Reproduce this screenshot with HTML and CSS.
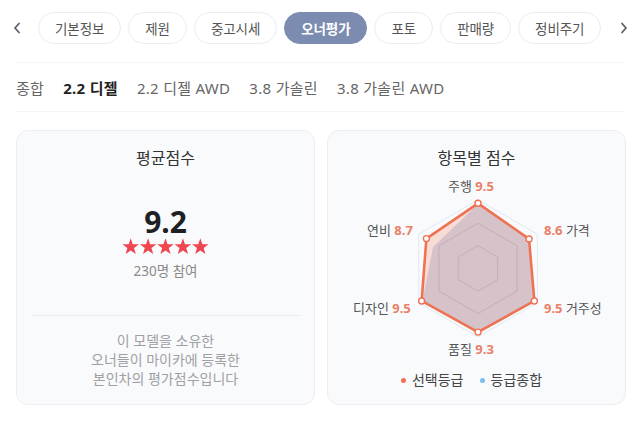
FILE: index.html
```html
<!DOCTYPE html>
<html lang="ko">
<head>
<meta charset="utf-8">
<link rel="stylesheet" href="styles.css">
</head>
<body>
<nav class="tabs">
  <span class="arrow"><svg width="8" height="12" viewBox="0 0 8 12"><path d="M6 1.5L2 6l4 4.5" fill="none" stroke="#5a5f6a" stroke-width="1.8" stroke-linecap="round" stroke-linejoin="round"/></svg></span>
  <span class="pill">기본정보</span>
  <span class="pill">제원</span>
  <span class="pill">중고시세</span>
  <span class="pill active">오너평가</span>
  <span class="pill">포토</span>
  <span class="pill">판매량</span>
  <span class="pill">정비주기</span>
  <span class="arrow right"><svg width="8" height="12" viewBox="0 0 8 12"><path d="M2 1.5L6 6l-4 4.5" fill="none" stroke="#5a5f6a" stroke-width="1.8" stroke-linecap="round" stroke-linejoin="round"/></svg></span>
</nav>

<div class="filters">
  <span class="filter">종합</span>
  <span class="filter on">2.2 디젤</span>
  <span class="filter">2.2 디젤 AWD</span>
  <span class="filter">3.8 가솔린</span>
  <span class="filter">3.8 가솔린 AWD</span>
</div>

<main class="cards">
  <section class="card avg">
    <h2 class="card-title">평균점수</h2>
    <div class="score">9.2</div>
    <svg class="stars" width="88" height="18" viewBox="0 0 88 18">
      <defs><polygon id="st" points="8.7,0.3 10.76,6.17 16.97,6.31 12.03,10.08 13.81,16.04 8.7,12.5 3.59,16.04 5.37,10.08 0.43,6.31 6.64,6.17" fill="#f0464f"/></defs>
      <use href="#st" x="0"/><use href="#st" x="17.4"/><use href="#st" x="34.8"/><use href="#st" x="52.2"/><use href="#st" x="69.6"/>
    </svg>
    <div class="count">230명 참여</div>
    <hr class="divider">
    <p class="note">이 모델을 소유한<br>오너들이 마이카에 등록한<br>본인차의 평가점수입니다</p>
  </section>

  <section class="card items">
    <h2 class="card-title">항목별 점수</h2>
    <div class="chart">
      <svg class="radar" width="297" height="190" viewBox="0 0 297 190">
        <polygon points="150,28.9 209.3,63.15 209.3,131.65 150,165.9 90.7,131.65 90.7,63.15" fill="none" stroke="#dfe9f3" stroke-width="1"/>
        <polygon points="150,52.2 189.1,74.8 189.1,120 150,142.6 110.9,120 110.9,74.8" fill="none" stroke="#d9d6de" stroke-width="1"/>
        <polygon points="150,74.6 169.7,86 169.7,108.8 150,120.2 130.3,108.8 130.3,86" fill="none" stroke="#d9d6de" stroke-width="1"/>
        <polygon points="150,32.32 201.02,67.94 206.36,129.94 150,161.11 93.64,129.94 98.39,67.6" fill="rgba(240,112,80,0.22)" stroke="none"/>
        <polygon points="150,33 200,68.5 205.5,129.5 150,160.5 94.5,129.5 105,76" fill="rgba(110,115,160,0.24)" stroke="none"/>
        <polygon points="150,32.32 201.02,67.94 206.36,129.94 150,161.11 93.64,129.94 98.39,67.6" fill="none" stroke="#ef7254" stroke-width="2.6" stroke-linejoin="round"/>
        <g fill="#fff" stroke="#ef7254" stroke-width="1.4">
          <circle cx="150" cy="32.32" r="3"/>
          <circle cx="201.02" cy="67.94" r="3"/>
          <circle cx="206.36" cy="129.94" r="3"/>
          <circle cx="150" cy="161.11" r="3"/>
          <circle cx="93.64" cy="129.94" r="3"/>
          <circle cx="98.39" cy="67.6" r="3"/>
        </g>
      </svg>
      <span class="lbl l-top">주행 <b>9.5</b></span>
      <span class="lbl l-ul">연비 <b>8.7</b></span>
      <span class="lbl l-ur"><b>8.6</b> 가격</span>
      <span class="lbl l-ll">디자인 <b>9.5</b></span>
      <span class="lbl l-lr"><b>9.5</b> 거주성</span>
      <span class="lbl l-bot">품질 <b>9.3</b></span>
    </div>
    <div class="legend">
      <span class="key"><i class="dot orange"></i>선택등급</span>
      <span class="key"><i class="dot blue"></i>등급종합</span>
    </div>
  </section>
</main>
</body>
</html>
```

FILE: styles.css
```css
* { box-sizing: border-box; }
body {
  margin: 0;
  background: #fff;
  font-family: "Noto Sans", "Noto Sans CJK KR", sans-serif;
  color: #333;
  width: 640px;
  height: 426px;
  overflow: hidden;
}
.tabs {
  display: flex;
  align-items: center;
  gap: 7px;
  padding: 12px 0 0 13px;
  height: 44px;
}
.arrow {
  width: 8px;
  height: 12px;
  display: flex;
  margin-right: 10px;
}
.arrow.right { margin-left: 12px; margin-right: 0; }
.pill {
  height: 32px;
  display: flex;
  align-items: center;
  padding: 0 16px;
  border: 1px solid #ebecef;
  border-radius: 16px;
  font-size: 13.5px;
  letter-spacing: -0.1px;
  color: #555;
  background: #fff;
}
.pill.active {
  background: #7b8cb0;
  border-color: #7b8cb0;
  color: #fff;
  font-weight: 700;
}
.filters {
  display: flex;
  align-items: center;
  gap: 19px;
  margin: 18px 16px 0;
  height: 50px;
  border-top: 1px solid #f3f4f6;
  border-bottom: 1px solid #f3f4f6;
  font-size: 15px;
  color: #666;
}
.filter { letter-spacing: 0.3px; }
.filter.on { font-weight: 700; color: #222; }
.cards {
  display: flex;
  gap: 12px;
  padding: 18px 14px 0 16px;
}
.card {
  width: 299px;
  height: 275px;
  background: #f9fafc;
  border: 1px solid #eceef2;
  border-radius: 12px;
  display: flex;
  flex-direction: column;
  align-items: center;
  padding-top: 16px;
}
.card-title {
  margin: 0;
  font-size: 16px;
  font-weight: 400;
  line-height: 22px;
  color: #333;
}
.score {
  margin-top: 37px;
  font-size: 30px;
  font-weight: 700;
  line-height: 32px;
  color: #1f2024;
}
.stars { display: block; margin-top: 0; }
.count {
  margin-top: 6px;
  font-size: 13.5px;
  line-height: 18px;
  color: #8a8a8a;
}
.divider {
  width: 268px;
  border: 0;
  border-top: 1px solid #ebecef;
  margin: 35px 0 0;
}
.note {
  margin: 15px 0 0;
  font-size: 14px;
  line-height: 19px;
  text-align: center;
  color: #a0a0a4;
}
.chart {
  position: relative;
  width: 297px;
  height: 190px;
  margin-top: 2px;
}
.radar { position: absolute; left: 0; top: 0; }
.lbl {
  position: absolute;
  font-size: 13px;
  line-height: 18px;
  color: #555;
  white-space: nowrap;
}
.lbl b { color: #ea8068; font-weight: 700; }
.l-top { left: 120px; top: 6px; }
.l-ul { left: 39px; top: 50px; }
.l-ur { left: 216px; top: 50px; }
.l-ll { left: 25px; top: 128px; }
.l-lr { left: 216px; top: 128px; }
.l-bot { left: 120px; top: 169px; }
.legend {
  display: flex;
  gap: 16px;
  margin-top: 10px;
  padding-right: 10px;
  font-size: 14px;
  line-height: 18px;
  color: #444;
}
.key { display: flex; align-items: center; gap: 6px; }
.dot { width: 5px; height: 5px; border-radius: 50%; display: block; }
.dot.orange { background: #ef7254; }
.dot.blue { background: #7cc0ea; }
```
